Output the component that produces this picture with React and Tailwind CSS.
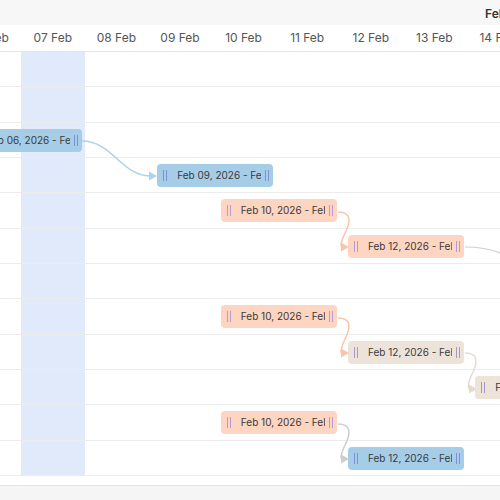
import React from 'react';

const COL_W = 63.6;
const X0 = -42.6;

const days = ['06 Feb', '07 Feb', '08 Feb', '09 Feb', '10 Feb', '11 Feb', '12 Feb', '13 Feb', '14 Feb'];

const palette = {
  blue: { bg: 'bg-[#a6cde7]', handle: 'bg-[#7f8fd6]' },
  peach: { bg: 'bg-[#fdd5c1]', handle: 'bg-[#b59ad6]' },
  beige: { bg: 'bg-[#eee3d8]', handle: 'bg-[#a894cf]' },
};

// one bar per row (null = empty row)
const rows = [
  null,
  null,
  { day: 0, label: 'Feb 06, 2026 - Feb 07, 2026', tone: 'blue' },
  { day: 3, label: 'Feb 09, 2026 - Feb 10, 2026', tone: 'blue' },
  { day: 4, label: 'Feb 10, 2026 - Feb 11, 2026', tone: 'peach' },
  { day: 6, label: 'Feb 12, 2026 - Feb 13, 2026', tone: 'peach' },
  null,
  { day: 4, label: 'Feb 10, 2026 - Feb 11, 2026', tone: 'peach' },
  { day: 6, label: 'Feb 12, 2026 - Feb 13, 2026', tone: 'beige' },
  { day: 8, label: 'Feb 14, 2026 - Feb 15, 2026', tone: 'beige' },
  { day: 4, label: 'Feb 10, 2026 - Feb 11, 2026', tone: 'peach' },
  { day: 6, label: 'Feb 12, 2026 - Feb 13, 2026', tone: 'blue' },
];

const Handle = ({ color }) => (
  <div className="flex gap-[2px] h-[11px] shrink-0">
    <div className={`w-px h-full ${color}`} />
    <div className={`w-px h-full ${color}`} />
  </div>
);

const Bar = ({ day, label, tone }) => {
  const c = palette[tone];
  return (
    <div
      className={`absolute top-[6px] h-[23px] w-[116px] rounded-[4px] ${c.bg} flex items-center pl-[6px] pr-[4px]`}
      style={{ left: X0 + day * COL_W + 9 }}
    >
      <Handle color={c.handle} />
      <div className="ml-[10px] w-[84px] overflow-hidden whitespace-nowrap text-[10px] text-[#3a3a3a]">
        {label}
      </div>
      <div className="ml-auto">
        <Handle color={c.handle} />
      </div>
    </div>
  );
};

const Arrow = ({ x, y, color }) => (
  <path d={`M${x - 8},${y - 4.5} L${x},${y} L${x - 8},${y + 4.5} Z`} fill={color} />
);

const Links = () => (
  <svg className="absolute left-0 top-0 pointer-events-none" width="500" height="500">
    <path d="M82,141 C112,141 122,176 150,176" fill="none" stroke="#a9d3ee" strokeWidth="1.5" />
    <Arrow x={157} y={176} color="#a9d3ee" />

    <path d="M338,212 C352,212 350,222 346,231 C341,241 340,247 342,247" fill="none" stroke="#f9c4aa" strokeWidth="1.5" />
    <Arrow x={349} y={247} color="#f9c4aa" />

    <path d="M465,247 C480,247 490,249 500,253" fill="none" stroke="#cfcfcf" strokeWidth="1.2" />

    <path d="M338,318 C352,318 350,328 346,337 C341,347 340,353 342,353" fill="none" stroke="#f9c4aa" strokeWidth="1.5" />
    <Arrow x={349} y={353} color="#f9c4aa" />

    <path d="M465,353 C479,353 477,363 473,372 C468,382 467,389 470,389" fill="none" stroke="#e6dacb" strokeWidth="1.5" />
    <Arrow x={477} y={389} color="#e6dacb" />

    <path d="M338,424 C352,424 350,434 346,443 C341,453 340,459 342,459" fill="none" stroke="#cdcdcd" strokeWidth="1.5" />
    <Arrow x={349} y={459} color="#cdcdcd" />
  </svg>
);

export default function App() {
  return (
    <div
      className="relative w-[500px] h-[500px] overflow-hidden bg-white"
      style={{ fontFamily: 'Inter, "Noto Sans", sans-serif' }}
    >
      {/* month band */}
      <div className="h-[25px] bg-[#f7f7f7] relative">
        <span className="absolute left-[485px] top-[5px] text-[12px] font-semibold text-[#333] whitespace-nowrap">
          Feb 2026
        </span>
      </div>

      {/* day header */}
      <div className="h-[27px] border-b border-[#e6e6e6] flex ml-[-42.6px]">
        {days.map((d) => (
          <div key={d} className="w-[63.6px] shrink-0 flex items-center justify-center text-[12px] text-[#555]">
            {d}
          </div>
        ))}
      </div>

      {/* body */}
      <div className="relative">
        <div className="absolute top-0 left-[21px] w-[63.6px] h-[424px] bg-[#e0eafb]" />
        {rows.map((r, i) => (
          <div key={i} className="relative h-[35.33px] border-b border-[#ececec]">
            {r && <Bar {...r} />}
          </div>
        ))}
      </div>

      <Links />

      {/* scrollbar strip */}
      <div className="absolute left-0 right-0 top-[485px] bottom-0 bg-[#f5f5f5] border-t border-[#e4e4e4]" />
    </div>
  );
}
